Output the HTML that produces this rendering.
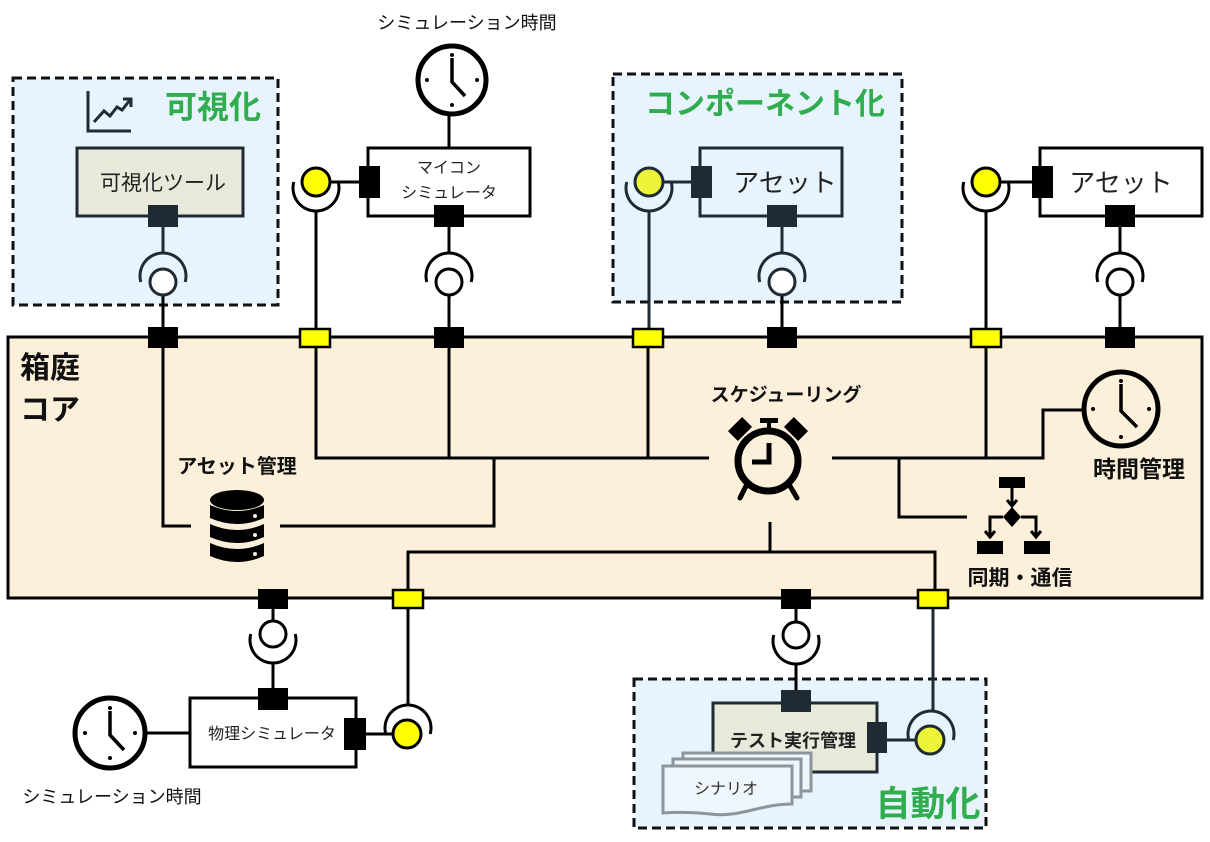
<!DOCTYPE html>
<html><head><meta charset="utf-8"><style>
html,body{margin:0;padding:0;background:#fff;}
svg{display:block;font-family:"Liberation Sans","Noto Sans CJK JP",sans-serif;}
</style></head><body>
<svg width="1210" height="842" viewBox="0 0 1210 842" xmlns="http://www.w3.org/2000/svg">
<rect x="13" y="78" width="265" height="227" fill="#e8f4fd" stroke="#111" stroke-width="3" stroke-dasharray="9,5"/>
<rect x="613" y="74" width="289" height="228" fill="#e8f4fd" stroke="#111" stroke-width="3" stroke-dasharray="9,5"/>
<rect x="634" y="679" width="352" height="149" fill="#e8f4fd" stroke="#111" stroke-width="3" stroke-dasharray="9,5"/>

<rect x="8" y="337" width="1194" height="261" fill="#fcf0da" stroke="#000" stroke-width="3"/>

<g fill="none" stroke="#000" stroke-width="3">
<line x1="163" y1="227" x2="163" y2="253" stroke="#1f2a33"/><line x1="163" y1="296" x2="163" y2="337"/>
<line x1="316" y1="211" x2="316" y2="337"/>
<line x1="449" y1="114" x2="449" y2="148"/>
<line x1="449" y1="227" x2="449" y2="253"/><line x1="449" y1="296" x2="449" y2="337"/>
<line x1="649" y1="211" x2="649" y2="337" stroke="#1f2a33"/>
<line x1="782" y1="227" x2="782" y2="253" stroke="#1f2a33"/><line x1="782" y1="296" x2="782" y2="337"/>
<line x1="986" y1="211" x2="986" y2="337"/>
<line x1="1120" y1="227" x2="1120" y2="253"/><line x1="1120" y1="296" x2="1120" y2="337"/>
<line x1="329" y1="182" x2="360" y2="182"/>
<line x1="662" y1="182" x2="692" y2="182" stroke="#1f2a33"/>
<line x1="999" y1="182" x2="1033" y2="182"/>
<polyline points="163,348 163,526 191,526"/>
<polyline points="280,526 494,526 494,458"/>
<polyline points="316,348 316,458 709,458"/>
<line x1="449" y1="348" x2="449" y2="458"/>
<line x1="648" y1="348" x2="648" y2="458"/>
<polyline points="832,458 1043,458 1043,410 1085,410"/>
<line x1="986" y1="348" x2="986" y2="458"/>
<polyline points="899,458 899,517 967,517"/>
<polyline points="770,522 770,552 408,552 408,591"/>
<polyline points="770,552 935,552 935,591"/>
<line x1="273" y1="609" x2="273" y2="620"/><line x1="273" y1="663" x2="273" y2="690"/>
<line x1="408" y1="608" x2="408" y2="705"/>
<line x1="796" y1="609" x2="796" y2="621"/><line x1="796" y1="664" x2="796" y2="697"/>
<line x1="933" y1="608" x2="933" y2="711" stroke="#1f2a33"/>
<line x1="144" y1="733" x2="190" y2="733"/>
<line x1="366" y1="734" x2="394" y2="734"/>
<line x1="887" y1="740" x2="917" y2="740" stroke="#1f2a33"/>
</g>

<rect x="77" y="148" width="166" height="68" fill="#e7eadb" stroke="#1f2a33" stroke-width="3"/>
<text x="163" y="190" font-size="21" text-anchor="middle" fill="#222">可視化ツール</text>
<rect x="368" y="148" width="162" height="68" fill="#fff" stroke="#000" stroke-width="3"/>
<text x="449" y="173" font-size="16" text-anchor="middle" fill="#222">マイコン</text>
<text x="449" y="198" font-size="16" text-anchor="middle" fill="#222">シミュレータ</text>
<rect x="700" y="148" width="142" height="68" fill="#e8f4fd" stroke="#1f2a33" stroke-width="3"/>
<text x="785" y="192" font-size="26" text-anchor="middle" fill="#222">アセット</text>
<rect x="1040" y="148" width="162" height="68" fill="#fff" stroke="#000" stroke-width="3"/>
<text x="1121" y="192" font-size="26" text-anchor="middle" fill="#222">アセット</text>
<rect x="190" y="698" width="166" height="69" fill="#fff" stroke="#000" stroke-width="3"/>
<text x="272" y="739" font-size="16" text-anchor="middle" fill="#222">物理シミュレータ</text>
<rect x="713" y="703" width="164" height="69" fill="#e7eadb" stroke="#1f2a33" stroke-width="3"/>
<text x="793" y="747" font-size="18" font-weight="bold" text-anchor="middle" fill="#222">テスト実行管理</text>

<g fill="#eef6fb" stroke="#8c959a" stroke-width="3">
<rect x="683" y="753" width="128" height="38"/>
<rect x="673" y="759" width="128" height="38"/>
<path d="M663,766 H792 V804 C760,804 740,818 710,814 C690,812 675,812 663,813 Z"/>
</g>
<text x="726" y="794" font-size="16" text-anchor="middle" fill="#333">シナリオ</text>

<g fill="#000">
<rect x="148" y="327" width="30" height="21"/><rect x="434" y="327" width="30" height="21"/>
<rect x="767" y="327" width="30" height="21"/><rect x="1105" y="327" width="30" height="21"/>
<rect x="258" y="589" width="30" height="20"/><rect x="781" y="589" width="30" height="20"/>
<rect x="434" y="205" width="30" height="22"/><rect x="1105" y="205" width="30" height="22"/>
<rect x="359" y="166" width="21" height="32"/><rect x="1032" y="166" width="21" height="32"/>
<rect x="258" y="688" width="30" height="22"/><rect x="344" y="718" width="22" height="32"/>
</g>
<g fill="#1f2a33">
<rect x="148" y="205" width="30" height="22"/><rect x="767" y="205" width="30" height="22"/>
<rect x="691" y="166" width="21" height="32"/>
<rect x="781" y="690" width="30" height="22"/><rect x="867" y="722" width="20" height="31"/>
</g>
<g fill="#ffff00" stroke="#000" stroke-width="2.5">
<rect x="300" y="329" width="30" height="18"/><rect x="633" y="329" width="30" height="18"/>
<rect x="971" y="329" width="30" height="18"/>
<rect x="393" y="590" width="30" height="18"/><rect x="918" y="590" width="30" height="18"/>
</g>

<g fill="none" stroke="#000" stroke-width="3">
<path d="M140.8,282 A23 23 0 1 1 185.2,282" stroke="#1f2a33"/>
<path d="M426.8,282 A23 23 0 1 1 471.2,282"/>
<path d="M759.8,282 A23 23 0 1 1 804.2,282" stroke="#1f2a33"/>
<path d="M1097.8,282 A23 23 0 1 1 1142.2,282"/>
<path d="M293.8,182 A23 23 0 1 0 338.2,182"/>
<path d="M626.8,182 A23 23 0 1 0 671.2,182" stroke="#1f2a33"/>
<path d="M963.8,182 A23 23 0 1 0 1008.2,182"/>
<path d="M250.8,634 A23 23 0 1 0 295.2,634"/>
<path d="M773.8,635 A23 23 0 1 0 818.2,635"/>
<path d="M385.8,734 A23 23 0 1 1 430.2,734"/>
<path d="M908.8,740 A23 23 0 1 1 953.2,740" stroke="#1f2a33"/>
</g>
<g fill="#fff" stroke-width="3">
<circle cx="163" cy="282" r="13" stroke="#1f2a33"/>
<circle cx="449" cy="282" r="13" stroke="#000"/>
<circle cx="782" cy="282" r="13" stroke="#1f2a33"/>
<circle cx="1120" cy="282" r="13" stroke="#000"/>
<circle cx="273" cy="634" r="13" stroke="#000"/>
<circle cx="796" cy="635" r="13" stroke="#000"/>
</g>
<circle cx="316" cy="182" r="14" fill="#ffff00" stroke="#000" stroke-width="3"/>
<circle cx="649" cy="182" r="14" fill="#ecf53a" stroke="#1f2a33" stroke-width="3"/>
<circle cx="986" cy="182" r="14" fill="#ffff00" stroke="#000" stroke-width="3"/>
<circle cx="407" cy="734" r="14" fill="#ffff00" stroke="#000" stroke-width="3"/>
<circle cx="930" cy="740" r="14" fill="#ecf53a" stroke="#1f2a33" stroke-width="3"/>

<g fill="none" stroke="#000" stroke-width="5">
<circle cx="452" cy="80" r="34"/>
<path d="M452,58 V82 L465,96" stroke-width="3.5"/>
<circle cx="110" cy="733" r="35"/>
<path d="M110,711 V735 L124,750" stroke-width="3.5"/>
<circle cx="1121" cy="409" r="37"/>
<path d="M1121,384 V411 L1137,427" stroke-width="3.5"/>
</g>
<g fill="#000">
<circle cx="452" cy="55" r="2"/><circle cx="452" cy="105" r="2"/><circle cx="427" cy="80" r="2"/><circle cx="477" cy="80" r="2"/>
<circle cx="110" cy="708" r="2"/><circle cx="110" cy="758" r="2"/><circle cx="85" cy="733" r="2"/><circle cx="135" cy="733" r="2"/>
<circle cx="1121" cy="381" r="2"/><circle cx="1121" cy="437" r="2"/><circle cx="1093" cy="409" r="2"/><circle cx="1149" cy="409" r="2"/>
</g>

<g>
<circle cx="768" cy="461" r="30" fill="none" stroke="#000" stroke-width="7"/>
<path d="M769,443 V462 H752" fill="none" stroke="#000" stroke-width="5"/>
<rect x="760" y="418" width="18" height="5" fill="#000"/>
<rect x="767" y="420" width="4" height="12" fill="#000"/>
<rect x="730" y="422" width="20" height="14" fill="#000" transform="rotate(-45 740 429)"/>
<rect x="786" y="422" width="20" height="14" fill="#000" transform="rotate(45 796 429)"/>
<path d="M746,486 L740,498 M790,486 L797,498" stroke="#000" stroke-width="5" stroke-linecap="round"/>
</g>

<g fill="#000">
<ellipse cx="237" cy="500" rx="27" ry="10"/>
<path d="M210,505 V518 Q237,530 264,518 V505 Q237,517 210,505Z"/>
<path d="M210,524 V537 Q237,549 264,537 V524 Q237,536 210,524Z"/>
<path d="M210,543 V556 Q237,568 264,556 V543 Q237,555 210,543Z"/>
</g>
<g fill="#fcf0da"><circle cx="255" cy="516" r="2"/><circle cx="255" cy="535" r="2"/><circle cx="255" cy="554" r="2"/></g>

<g fill="#000" stroke="#000">
<rect x="999" y="477" width="26" height="11" stroke="none"/>
<path d="M1012,488 V505 M1007,500 L1012,506 L1017,500" fill="none" stroke-width="3"/>
<path d="M1012,507 L1021,517 L1012,527 L1003,517Z" stroke="none"/>
<path d="M1003,517 H990 V537 M1021,517 H1036 V537 M985,531 L990,537 L995,531 M1031,531 L1036,537 L1041,531" fill="none" stroke-width="3"/>
<rect x="977" y="541" width="26" height="13" stroke="none"/>
<rect x="1024" y="541" width="26" height="13" stroke="none"/>
</g>

<g fill="none" stroke="#1f2a33" stroke-width="3">
<path d="M88,91 V131 H131"/>
<path d="M94,122 L104,111 L110,116 L117,107 L122,110 L130,100"/>
<path d="M123,99 H131 V107"/>
</g>

<g fill="#2fad4f" font-weight="bold">
<text x="213" y="118" font-size="32" text-anchor="middle">可視化</text>
<text x="765" y="114" font-size="30" text-anchor="middle">コンポーネント化</text>
<text x="928" y="816" font-size="35" text-anchor="middle">自動化</text>
</g>
<g fill="#111" font-weight="bold">
<text x="20" y="378" font-size="30">箱庭</text>
<text x="20" y="420" font-size="30">コア</text>
<text x="786" y="401" font-size="19" text-anchor="middle">スケジューリング</text>
<text x="237" y="473" font-size="20" text-anchor="middle">アセット管理</text>
<text x="1139" y="477" font-size="23" text-anchor="middle">時間管理</text>
<text x="1020" y="585" font-size="21" text-anchor="middle">同期・通信</text>
</g>
<g fill="#111">
<text x="467" y="29" font-size="18" text-anchor="middle">シミュレーション時間</text>
<text x="112" y="803" font-size="18" text-anchor="middle">シミュレーション時間</text>
</g>
</svg>
</body></html>
